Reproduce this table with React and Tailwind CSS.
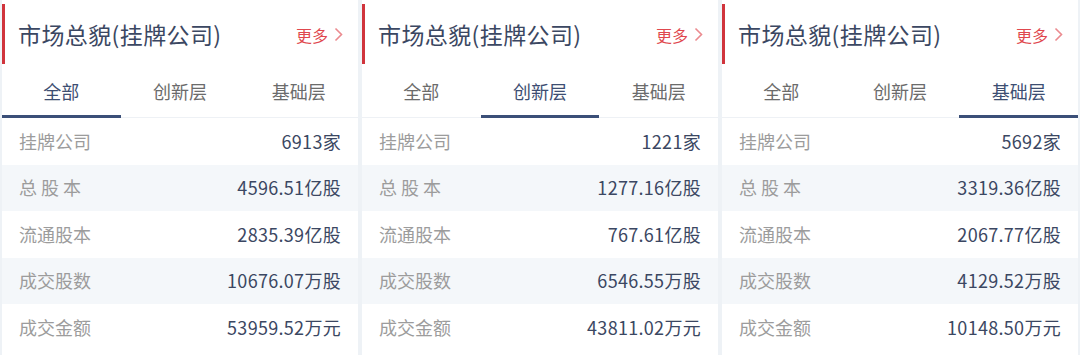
const tabs = ['全部', '创新层', '基础层'];

const cards = [
  {
    active: 0,
    rows: [
      ['挂牌公司', '6913家'],
      ['总 股 本', '4596.51亿股'],
      ['流通股本', '2835.39亿股'],
      ['成交股数', '10676.07万股'],
      ['成交金额', '53959.52万元'],
    ],
  },
  {
    active: 1,
    rows: [
      ['挂牌公司', '1221家'],
      ['总 股 本', '1277.16亿股'],
      ['流通股本', '767.61亿股'],
      ['成交股数', '6546.55万股'],
      ['成交金额', '43811.02万元'],
    ],
  },
  {
    active: 2,
    rows: [
      ['挂牌公司', '5692家'],
      ['总 股 本', '3319.36亿股'],
      ['流通股本', '2067.77亿股'],
      ['成交股数', '4129.52万股'],
      ['成交金额', '10148.50万元'],
    ],
  },
];

const Card = ({ card }) => (
  <div className="w-[356px] bg-white flex flex-col">
    {/* header */}
    <div className="h-[65px] flex items-center pt-[4px]">
      <div className="w-[3px] h-[60px] bg-[#d0343c] self-start" />
      <div className="flex-1 flex items-center justify-between pl-[13px] pr-[15px]">
        <span className="text-[23px] tracking-[0.4px] text-[#3b4762]">市场总貌(挂牌公司)</span>
        <span className="flex items-center gap-[6px] text-[16px] text-[#e0474e]">
          更多
          <svg width="9" height="15" viewBox="0 0 9 15" fill="none">
            <path d="M1.5 1.5 L7.5 7.5 L1.5 13.5" stroke="#eb8a8f" strokeWidth="1.6" />
          </svg>
        </span>
      </div>
    </div>

    {/* tabs */}
    <div className="grid grid-cols-3 h-[53px] border-b border-[#eef1f5]">
      {tabs.map((t, i) => (
        <div key={t} className="relative flex items-center justify-center">
          <span className={`text-[18px] ${i === card.active ? 'text-[#3d4e72]' : 'text-[#6b6b6b]'}`}>{t}</span>
          {i === card.active && <div className="absolute left-0 right-0 bottom-[-1px] h-[3px] bg-[#3b4f78]" />}
        </div>
      ))}
    </div>

    {/* rows */}
    {card.rows.map(([label, value], i) => (
      <div
        key={label}
        className={`h-[46.5px] flex items-center justify-between px-[17px] ${i % 2 === 1 ? 'bg-[#f4f7fa]' : 'bg-white'}`}
      >
        <span className="text-[18px] text-[#9c9c9c]">{label}</span>
        <span className="text-[18px] tracking-[0.3px] text-[#3b4762]">{value}</span>
      </div>
    ))}
  </div>
);

export default function App() {
  return (
    <div
      className="w-[1080px] h-[355px] bg-[#eef2f6] flex gap-[4px] px-[2px] overflow-hidden"
      style={{ fontFamily: '"Noto Sans CJK SC", "Noto Sans", sans-serif' }}
    >
      {cards.map((c, i) => (
        <Card key={i} card={c} />
      ))}
    </div>
  );
}
